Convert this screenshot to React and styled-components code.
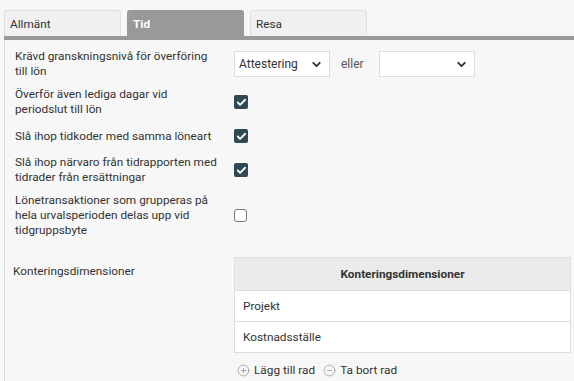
import React from 'react';
import styled, { createGlobalStyle } from 'styled-components';
import { ChevronDown, Check, CirclePlus, CircleMinus } from 'lucide-react';

const GlobalStyle = createGlobalStyle`
  body {
    margin: 0;
    background: #f7f7f7;
    font-family: Roboto, "Liberation Sans", sans-serif;
    font-size: 11.8px;
    color: #333;
  }
`;

const Page = styled.div`
  padding: 10px 0 0 4px;
  height: 371px;
  display: flex;
  flex-direction: column;
`;

const TabBar = styled.div`
  display: flex;
  gap: 6px;
  border-bottom: 4px solid #999;
`;

const Tab = styled.div`
  width: 117px;
  height: 26px;
  box-sizing: border-box;
  padding: 0 5px;
  display: flex;
  align-items: center;
  border: 1px solid ${({ active }) => (active ? '#999' : '#e0e0e0')};
  border-bottom: none;
  border-radius: 3px 3px 0 0;
  background: ${({ active }) => (active ? '#999' : '#f0f0f0')};
  color: ${({ active }) => (active ? '#fff' : '#333')};
  font-weight: ${({ active }) => (active ? 700 : 400)};
`;

const Panel = styled.div`
  flex: 1;
  border-left: 1px solid #ddd;
  padding: 5px 0 0 10px;
`;

const Row = styled.div`
  display: grid;
  grid-template-columns: 219px 1fr;
  align-items: center;
  padding: 4px 0;
  min-height: 22px;
  line-height: 15px;
`;

const Label = styled.div`
  white-space: nowrap;
`;

const Controls = styled.div`
  display: flex;
  align-items: center;
  gap: 11px;
`;

const SelectBox = styled.div`
  width: 96px;
  height: 26px;
  box-sizing: border-box;
  border: 1px solid #ddd;
  background: #fff;
  display: flex;
  align-items: center;
  justify-content: space-between;
  padding: 0 6px 0 4px;
  color: #333;
  font-size: 12px;
`;

const Muted = styled.span`
  color: #555;
  font-size: 12px;
  margin-right: 4px;
`;

const Box = styled.div`
  width: ${({ checked }) => (checked ? 14 : 13)}px;
  height: ${({ checked }) => (checked ? 14 : 13)}px;
  box-sizing: border-box;
  border-radius: ${({ checked }) => (checked ? 2 : 3)}px;
  background: ${({ checked }) => (checked ? '#2e4a55' : '#fff')};
  border: ${({ checked }) => (checked ? 'none' : '1px solid #777')};
  display: flex;
  align-items: center;
  justify-content: center;
  color: #fff;
`;

const TableRow = styled.div`
  display: grid;
  grid-template-columns: 219px 337px;
  margin-top: 15px;
`;

const TableLabel = styled.div`
  padding-top: 7px;
  margin-left: -2px;
`;

const Table = styled.div`
  border: 1px solid #ddd;
  background: #fff;
`;

const HeadCell = styled.div`
  height: 32px;
  background: #ebebeb;
  border-bottom: 1px solid #ddd;
  display: flex;
  align-items: center;
  justify-content: center;
  font-weight: 700;
`;

const Cell = styled.div`
  height: 30px;
  display: flex;
  align-items: center;
  padding-left: 8px;
  border-top: ${({ first }) => (first ? 'none' : '1px solid #ddd')};
`;

const Actions = styled.div`
  grid-column: 2;
  display: flex;
  align-items: center;
  gap: 4px;
  padding: 10px 0 0 3px;
`;

const Action = styled.span`
  display: inline-flex;
  align-items: center;
  gap: 4px;
  margin-right: 4px;
  svg {
    color: #888;
  }
`;

const Checkbox = ({ checked }) => (
  <Box checked={checked}>{checked && <Check size={11} strokeWidth={4} />}</Box>
);

const Select = ({ value }) => (
  <SelectBox>
    <span>{value}</span>
    <ChevronDown size={13} strokeWidth={3.5} color="#333" />
  </SelectBox>
);

const Lines = ({ lines }) => (
  <Label>
    {lines.map((l, i) => (
      <React.Fragment key={l}>
        {i > 0 && <br />}
        {l}
      </React.Fragment>
    ))}
  </Label>
);

const options = [
  { lines: ['Överför även lediga dagar vid', 'periodslut till lön'], checked: true },
  { lines: ['Slå ihop tidkoder med samma löneart'], checked: true },
  { lines: ['Slå ihop närvaro från tidrapporten med', 'tidrader från ersättningar'], checked: true },
  {
    lines: ['Lönetransaktioner som grupperas på', 'hela urvalsperioden delas upp vid', 'tidgruppsbyte'],
    checked: false,
  },
];

const App = () => (
  <>
    <GlobalStyle />
    <Page>
      <TabBar>
        <Tab>Allmänt</Tab>
        <Tab active>Tid</Tab>
        <Tab>Resa</Tab>
      </TabBar>
      <Panel>
        <Row>
          <Lines lines={['Krävd granskningsnivå för överföring', 'till lön']} />
          <Controls>
            <Select value="Attestering" />
            <Muted>eller</Muted>
            <Select value="" />
          </Controls>
        </Row>
        {options.map((o) => (
          <Row key={o.lines[0]}>
            <Lines lines={o.lines} />
            <Controls>
              <Checkbox checked={o.checked} />
            </Controls>
          </Row>
        ))}
        <TableRow>
          <TableLabel>Konteringsdimensioner</TableLabel>
          <Table>
            <HeadCell>Konteringsdimensioner</HeadCell>
            <Cell first>Projekt</Cell>
            <Cell>Kostnadsställe</Cell>
          </Table>
          <Actions>
            <Action>
              <CirclePlus size={13} strokeWidth={1.2} /> Lägg till rad
            </Action>
            <Action>
              <CircleMinus size={13} strokeWidth={1.2} /> Ta bort rad
            </Action>
          </Actions>
        </TableRow>
      </Panel>
    </Page>
  </>
);

export default App;
